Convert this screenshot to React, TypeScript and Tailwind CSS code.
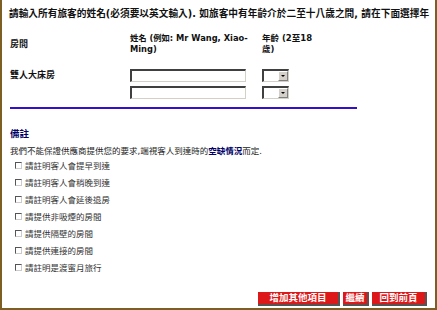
import React from 'react';

const font = { fontFamily: '"DejaVu Sans", "Noto Sans CJK TC", sans-serif' };

const notes = [
  '請註明客人會提早到達',
  '請註明客人會稍晚到達',
  '請註明客人會延後退房',
  '請提供非吸煙的房間',
  '請提供隔壁的房間',
  '請提供連接的房間',
  '請註明是渡蜜月旅行',
];

function TextBox() {
  return (
    <div className="w-[116px] h-[13px] bg-white border-t-2 border-l-2 border-b border-r border-t-[#404040] border-l-[#404040] border-b-[#d4d0c8] border-r-[#d4d0c8]" />
  );
}

function AgeSelect() {
  return (
    <div className="w-[27px] h-[13px] flex bg-white border-t-2 border-l-2 border-b border-r border-t-[#404040] border-l-[#404040] border-b-[#d4d0c8] border-r-[#d4d0c8]">
      <div className="flex-1" />
      <div className="w-[10px] h-full bg-[#d4d0c8] border-t border-l border-white border-r border-b border-r-[#808080] border-b-[#808080] flex items-center justify-center">
        <div className="w-0 h-0 border-l-[2px] border-r-[2px] border-t-[2px] border-l-transparent border-r-transparent border-t-black" />
      </div>
    </div>
  );
}

function RedButton({ label, w }: { label: string; w: string }) {
  return (
    <div className={`${w} h-[14px] bg-[#dd1818] border-r-2 border-b-2 border-[#555] flex items-center justify-center text-white font-bold text-[9.5px] leading-none`}>
      {label}
    </div>
  );
}

export default function App() {
  return (
    <div
      style={font}
      className="w-[437px] h-[310px] bg-white border-l-2 border-r-2 border-b-2 border-[#7d5f24] overflow-hidden text-[#111] flex flex-col"
    >
      {/* intro line */}
      <div className="pl-[7px] pt-[8px] text-[9.7px] leading-[12px] font-bold whitespace-nowrap">
        請輸入所有旅客的姓名(必須要以英文輸入). 如旅客中有年齡介於二至十八歲之間, 請在下面選擇年
      </div>

      {/* guest table */}
      <div className="pl-[8px] mt-[13px] grid grid-cols-[120px_132px_1fr] text-[9px] leading-[11px] font-bold">
        <div className="flex items-center">房間</div>
        <div className="text-[8.3px]">
          姓名 (例如: Mr Wang, Xiao-
          <br />
          Ming)
        </div>
        <div className="text-[8.5px]">
          年齡 (2至18
          <br />
          歲)
        </div>

        <div className="pt-[14px]">
          <div className="h-[13px] flex items-center">雙人大床房</div>
        </div>
        <div className="pt-[14px] flex flex-col gap-[4px]">
          <TextBox />
          <TextBox />
        </div>
        <div className="pt-[14px] flex flex-col gap-[4px]">
          <AgeSelect />
          <AgeSelect />
        </div>
      </div>

      <div className="ml-[8px] mt-[8px] w-[347px] h-[2px] bg-[#3311cc]" />

      {/* notes */}
      <div className="pl-[8px] mt-[19px] text-[9px] leading-[12px]">
        <div className="font-bold text-[#000066] text-[9.5px]">備註</div>
        <div className="mt-[5px] text-[8.5px] text-[#222]">
          我們不能保證供應商提供您的要求,端視客人到達時的
          <span className="font-bold text-[#000066]">空缺情況</span>
          而定.
        </div>
        <div className="flex flex-col">
          {notes.map((n) => (
            <div key={n} className="h-[17px] flex items-center pl-[5px] text-[8.5px] text-[#333]">
              <div className="w-[7px] h-[7px] bg-white border-t border-l border-[#555] border-r border-b border-r-[#ccc] border-b-[#ccc] mr-[3px]" />
              {n}
            </div>
          ))}
        </div>
      </div>

      {/* actions */}
      <div className="mt-auto mb-[2px] pr-[8px] flex justify-end gap-[3px]">
        <RedButton label="增加其他項目" w="w-[82px]" />
        <RedButton label="繼續" w="w-[26px]" />
        <RedButton label="回到前頁" w="w-[55px]" />
      </div>
    </div>
  );
}
